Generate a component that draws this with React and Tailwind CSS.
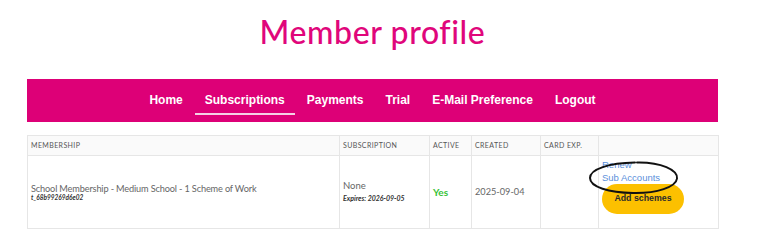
import React from 'react';

const navItems = ['Home', 'Subscriptions', 'Payments', 'Trial', 'E-Mail Preference', 'Logout'];

const headers = [
  { label: 'Membership', w: 'w-[312px]' },
  { label: 'Subscription', w: 'w-[90px]' },
  { label: 'Active', w: 'w-[42px]' },
  { label: 'Created', w: 'w-[69px]' },
  { label: 'Card Exp.', w: 'w-[58px]' },
  { label: '', w: 'w-[120px]' },
];

const App = () => {
  return (
    <div className="w-[768px] h-[246px] bg-white overflow-hidden font-['Lato',sans-serif]">
      <div className="ml-[27px] w-[691px]">
        <h1 className="mt-[13px] mb-[29px] text-center text-[32px] leading-[37px] tracking-[0.6px] font-medium text-[#e0067b]">
          Member profile
        </h1>

        <nav className="h-[43px] bg-[#dd0077] flex justify-center items-start pt-[13px] gap-[2px] font-['Liberation_Sans',Arial,sans-serif]">
          {navItems.map((item) => (
            <a
              key={item}
              href="#"
              className={`px-[10px] pb-[5px] border-b-2 text-[12px] leading-[16px] font-bold text-white ${
                item === 'Subscriptions' ? 'border-[#f4d0e4]' : 'border-transparent'
              }`}
            >
              {item}
            </a>
          ))}
        </nav>

        <table className="mt-[13px] w-[691px] table-fixed border-collapse border border-[#e6e6e6]">
          <thead>
            <tr className="h-[20px] bg-[#fafafa]">
              {headers.map((h, i) => (
                <th
                  key={i}
                  className={`${h.w} border border-[#e6e6e6] px-[3px] text-left text-[7px] font-normal uppercase tracking-[0.4px] text-[#555]`}
                >
                  {h.label}
                </th>
              ))}
            </tr>
          </thead>
          <tbody>
            <tr className="h-[73px]">
              <td className="border border-[#e6e6e6] px-[3px] align-middle">
                <div className="text-[9.2px] leading-[11px] tracking-[-0.15px] text-[#666]">
                  School Membership - Medium School - 1 Scheme of Work
                </div>
                <div className="text-[6.5px] leading-[8px] italic font-bold text-[#333]">t_68b99269d6e02</div>
              </td>
              <td className="border border-[#e6e6e6] px-[3px] align-middle">
                <div className="text-[9.5px] leading-[12px] text-[#666]">None</div>
                <div className="text-[7px] leading-[12px] italic font-bold text-[#333]">Expires: 2026-09-05</div>
              </td>
              <td className="border border-[#e6e6e6] px-[3px] align-middle text-[10px] font-bold text-[#36c236]">
                Yes
              </td>
              <td className="border border-[#e6e6e6] px-[3px] align-middle text-[9.2px] text-[#666]">
                2025-09-04
              </td>
              <td className="border border-[#e6e6e6] px-[3px]"></td>
              <td className="border border-[#e6e6e6] px-[3px] align-top">
                <div className="relative pt-[2px] flex flex-col items-start font-['Liberation_Sans',Arial,sans-serif]">
                  <a href="#" className="text-[9.5px] leading-[13px] text-[#5b8fdb]">Renew</a>
                  <a href="#" className="text-[9.5px] leading-[13px] text-[#5b8fdb]">Sub Accounts</a>
                  <button className="w-[82px] h-[30px] rounded-full bg-[#fcc000] text-[8.8px] font-bold text-[#2b2b2b]">
                    Add schemes
                  </button>
                  <svg
                    className="absolute left-[-15px] top-[4px] pointer-events-none"
                    width="94"
                    height="36"
                    viewBox="0 0 94 36"
                    fill="none"
                  >
                    <path
                      d="M50 2.5 C 74 2, 91 10, 90 18.5 C 89 27, 70 33.5, 46 33 C 22 32.5, 3 27, 3 18 C 3 9, 22 3, 48 2.6"
                      stroke="#111"
                      strokeWidth="2"
                      strokeLinecap="round"
                    />
                  </svg>
                </div>
              </td>
            </tr>
          </tbody>
        </table>
      </div>
    </div>
  );
};

export default App;
